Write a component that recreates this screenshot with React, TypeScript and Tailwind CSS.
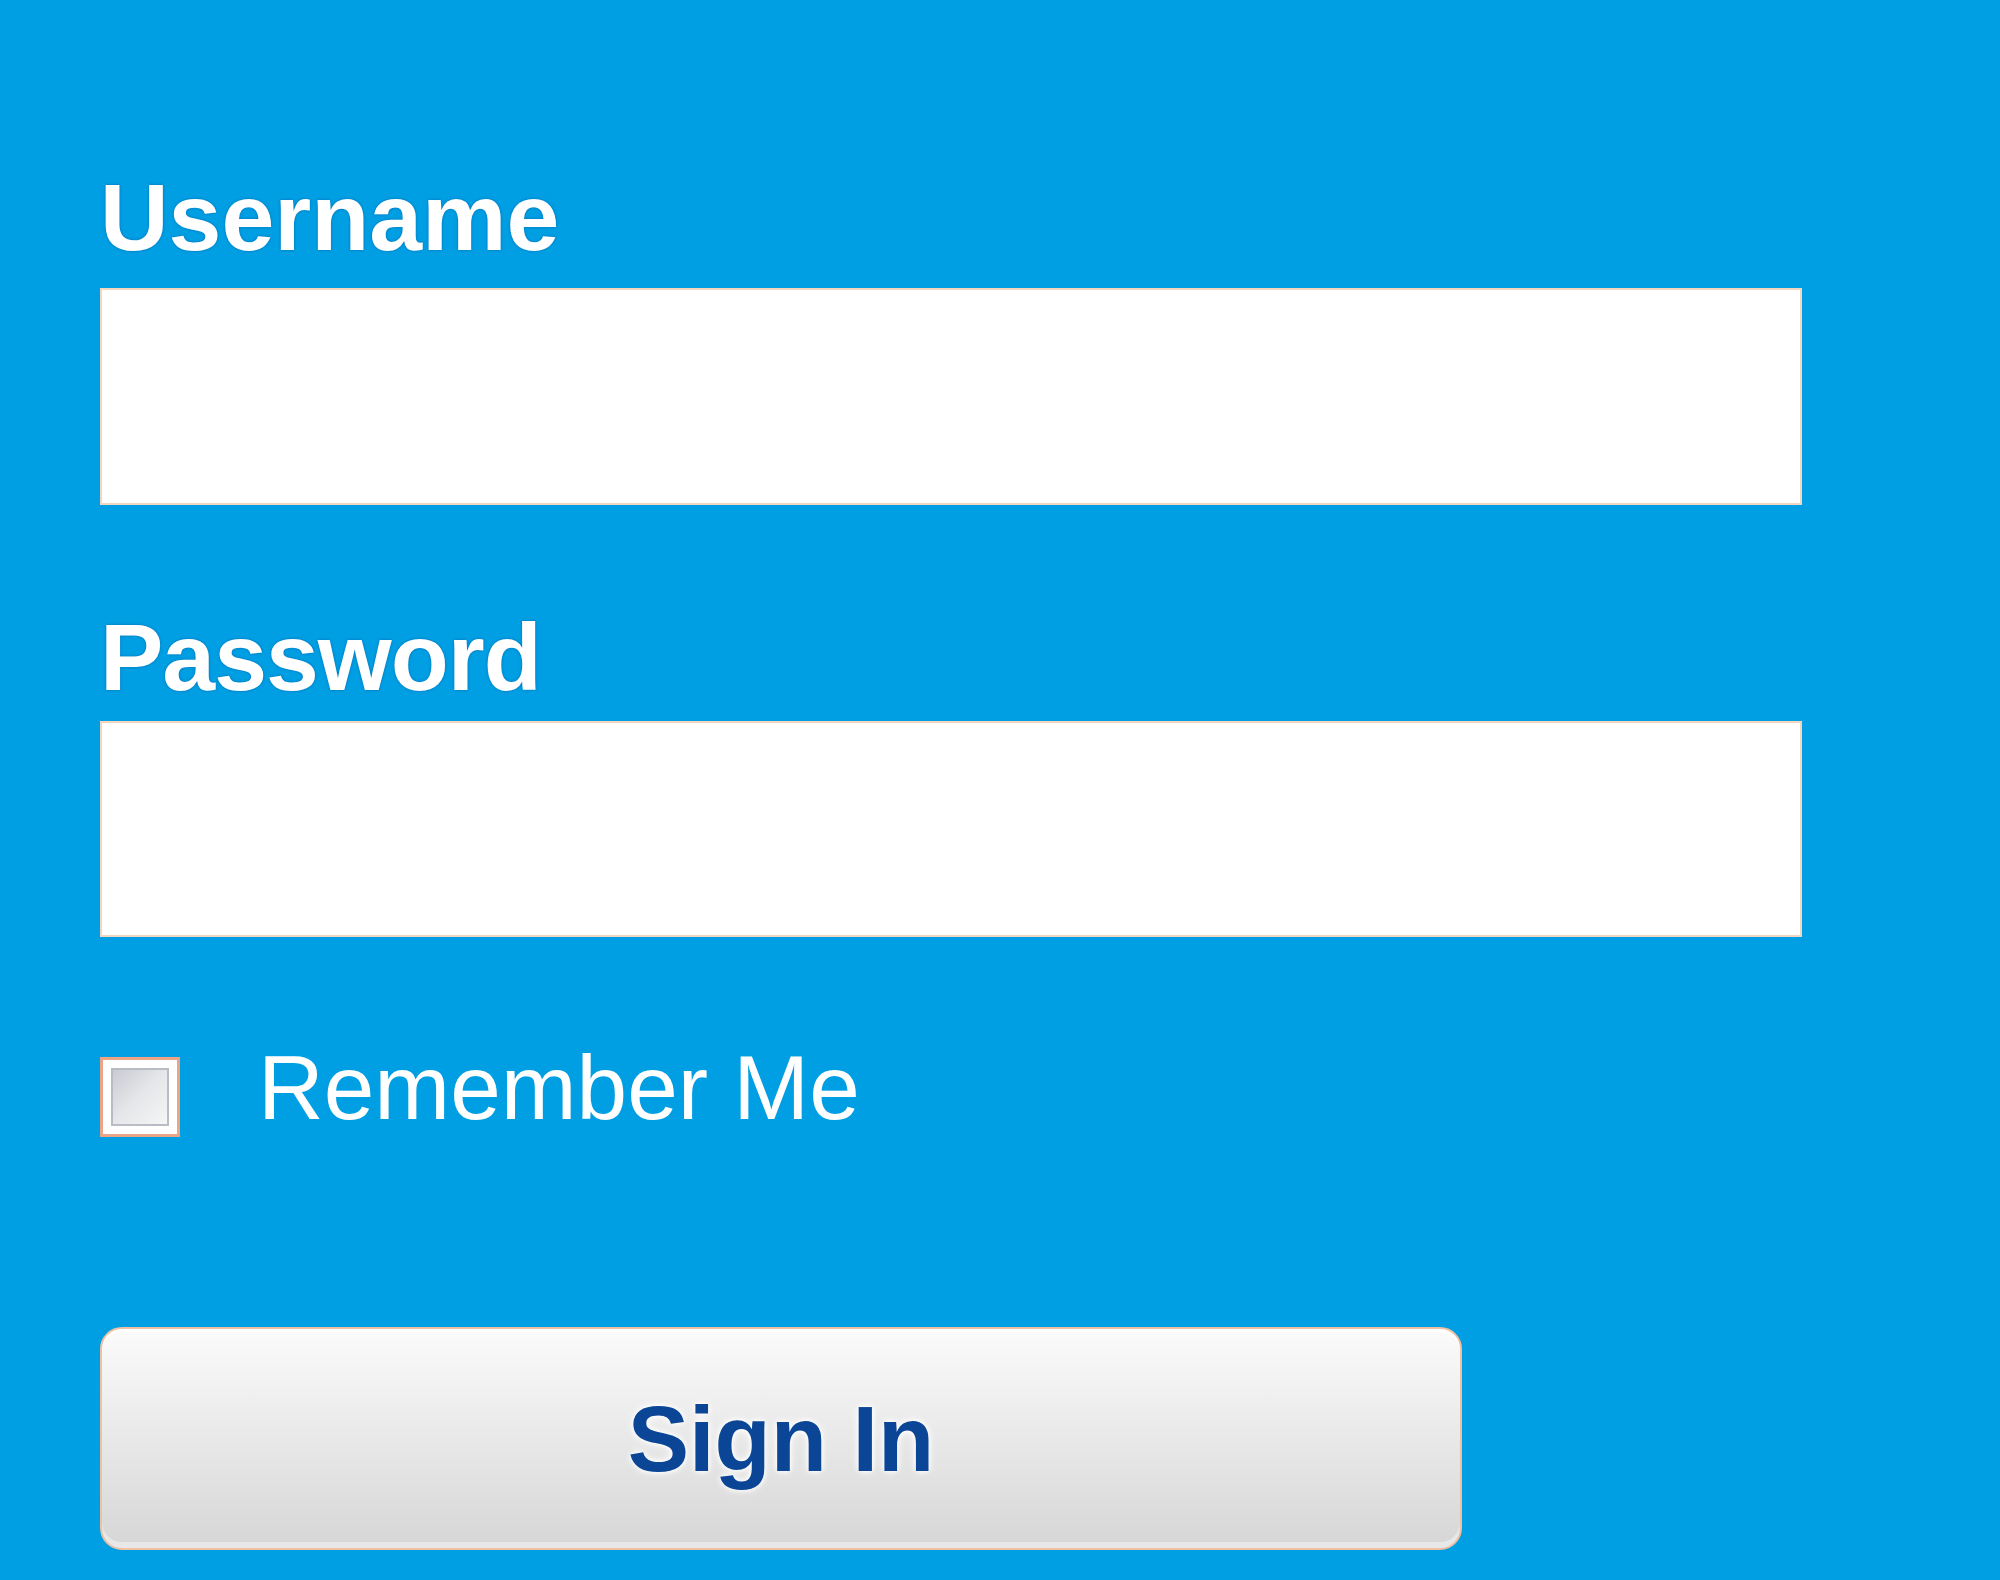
import { useState } from "react";

const labelFont = "font-['Liberation_Sans',Arial,sans-serif]";

export default function App() {
  const [remember, setRemember] = useState(false);

  return (
    <div className={`min-h-[1580px] w-full bg-[#009fe3] ${labelFont}`}>
      <form
        onSubmit={(e) => e.preventDefault()}
        className="flex w-[1702px] flex-col pl-[100px] pt-[170px]"
      >
        <label
          htmlFor="username"
          className="block text-[95px] font-bold leading-none text-white [text-shadow:0_0_3px_rgba(0,60,140,0.5)]"
        >
          Username
        </label>
        <input
          id="username"
          type="text"
          className="mt-[23px] block h-[217px] w-[1702px] border-2 border-[#f3d6bf] bg-white px-6 text-[80px] outline-none"
        />

        <label
          htmlFor="password"
          className="mt-[105px] block text-[95px] font-bold leading-none tracking-[-1px] text-white [text-shadow:0_0_3px_rgba(0,60,140,0.5)]"
        >
          Password
        </label>
        <input
          id="password"
          type="password"
          className="mt-[16px] block h-[216px] w-[1702px] border-2 border-[#f3d6bf] bg-white px-6 text-[80px] outline-none"
        />

        <label className="mt-[105px] flex cursor-pointer items-start">
          <span
            onClick={() => setRemember(!remember)}
            className="mt-[15px] flex h-[80px] w-[80px] shrink-0 items-center justify-center border-[3px] border-[#e9a585] bg-white p-[8px]"
          >
            <span className="block h-full w-full border-2 border-[#b9bcc4] bg-gradient-to-br from-[#c9cbd1] via-[#e6e7ea] to-[#f5f5f5]">
              {remember && (
                <span className="block text-center text-[48px] leading-[56px] text-[#333]">
                  ✓
                </span>
              )}
            </span>
          </span>
          <span className="ml-[78px] text-[91px] leading-none text-white">
            Remember Me
          </span>
        </label>

        <button
          type="submit"
          className="mt-[190px] flex h-[223px] w-[1362px] items-center justify-center rounded-[22px] border-2 border-[#f0c0a2] bg-gradient-to-b from-[#fbfbfb] to-[#d6d6d6] text-[92px] font-bold text-[#0b4596] shadow-[inset_0_3px_0_#ffffff,inset_0_-6px_0_#e8e8e8] [text-shadow:0_0_5px_#ffffff,0_0_8px_#ffffff]"
        >
          Sign In
        </button>
      </form>
    </div>
  );
}
